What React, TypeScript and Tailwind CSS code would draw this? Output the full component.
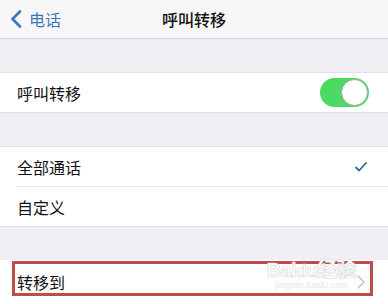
import React, { useState } from 'react';

const font = { fontFamily: '"Noto Sans CJK SC", "Noto Sans", sans-serif' };

const Toggle: React.FC<{ on: boolean; onChange: () => void }> = ({ on, onChange }) => (
  <button
    onClick={onChange}
    className={`relative w-[49px] h-[29px] rounded-full ${on ? 'bg-[#4cd964]' : 'bg-[#e5e5ea]'}`}
  >
    <span
      className={`absolute top-[1px] w-[27px] h-[27px] rounded-full bg-white border border-[#9aa79c] ${
        on ? 'left-[21px]' : 'left-[1px]'
      }`}
    />
  </button>
);

const App: React.FC = () => {
  const [forwarding, setForwarding] = useState(true);

  return (
    <div className="w-[388px] h-[304px] overflow-hidden bg-[#efeff4] text-[16px] text-[#111]" style={font}>
      {/* nav bar */}
      <div className="relative h-[39px] bg-[#f7f7f8] border-b border-[#d4d4d8] flex items-center">
        <div className="flex items-center pl-[10px] text-[#3a76bd]">
          <svg width="12" height="18" viewBox="0 0 12 18" fill="none">
            <path d="M10 1.5L2.5 9L10 16.5" stroke="#3a76bd" strokeWidth="2.6" strokeLinecap="round" strokeLinejoin="round" />
          </svg>
          <span className="ml-[7px] leading-none">电话</span>
        </div>
        <div className="absolute left-0 right-0 text-center font-medium leading-none">呼叫转移</div>
      </div>

      <div className="h-[33px]" />

      {/* 呼叫转移 toggle */}
      <div className="h-[41px] bg-white border-y border-[#e0e0e4] flex items-center justify-between pl-[17px] pr-[19px]">
        <span>呼叫转移</span>
        <Toggle on={forwarding} onChange={() => setForwarding(!forwarding)} />
      </div>

      <div className="h-[33px]" />

      {/* 全部通话 / 自定义 */}
      <div className="bg-white border-y border-[#e0e0e4]">
        <div className="ml-[16px] h-[40px] flex items-center justify-between pr-[21px] border-b border-[#e6e6ea]">
          <span className="pl-[1px]">全部通话</span>
          <svg width="12" height="10" viewBox="0 0 12 10" fill="none">
            <path d="M1 5.5L4.2 8.5L11 1" stroke="#2f6a9e" strokeWidth="1.8" strokeLinecap="round" strokeLinejoin="round" />
          </svg>
        </div>
        <div className="h-[39px] flex items-center pl-[17px]">
          <span>自定义</span>
        </div>
      </div>

      <div className="h-[33px]" />

      {/* 转移到 */}
      <div className="h-[50px] bg-white pt-[1px]">
        <div className="relative ml-[12px] w-[361px] h-[35px] border-[3px] border-[#bf4c4a] flex items-center justify-between pl-[2px] pr-[5px]">
          <span className="mt-[6px]">转移到</span>
          <svg width="8" height="14" viewBox="0 0 8 14" fill="none" className="mt-[6px]">
            <path d="M1 1L7 7L1 13" stroke="#c7c7cc" strokeWidth="1.6" strokeLinecap="round" strokeLinejoin="round" />
          </svg>
          {/* watermark */}
          <div
            className="absolute right-[14px] top-[-4px] flex flex-col items-center leading-none text-white"
            style={{ fontFamily: '"Liberation Sans", "Noto Sans CJK SC", sans-serif' }}
          >
            <span className="text-[20px] font-bold tracking-tight" style={{ WebkitTextStroke: '0.7px #dadadc' }}>
              Bai<span className="text-[18px]">du</span>经验
            </span>
            <span className="text-[9px] mt-[1px] text-[#e6e6e8]">jingyan.baidu.com</span>
          </div>
        </div>
      </div>
    </div>
  );
};

export default App;
